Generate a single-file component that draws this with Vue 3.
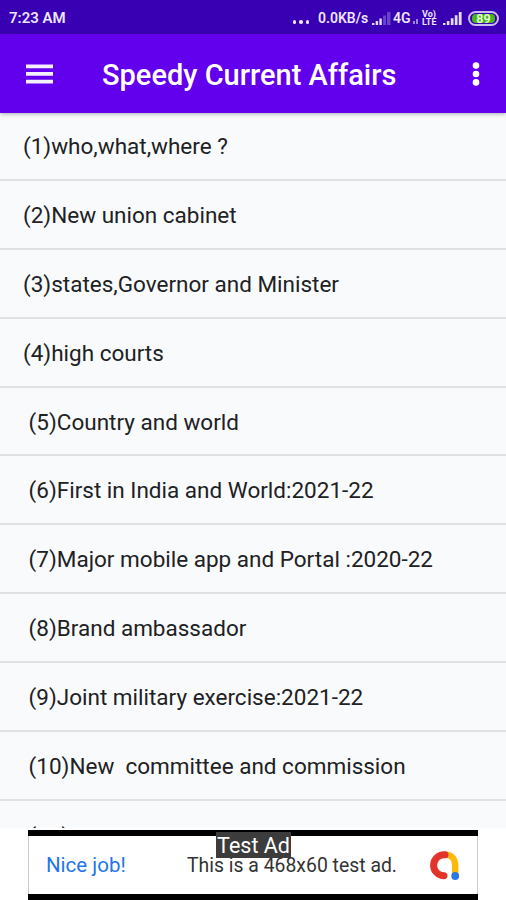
<script setup>
const items = [
  '(1)who,what,where ?',
  '(2)New union cabinet',
  '(3)states,Governor and Minister',
  '(4)high courts',
  ' (5)Country and world',
  ' (6)First in India and World:2021-22',
  ' (7)Major mobile app and Portal :2020-22',
  ' (8)Brand ambassador',
  ' (9)Joint military exercise:2021-22',
  ' (10)New  committee and commission',
  ' (11)Account and Organisation',
]
</script>

<template>
  <div class="screen">
    <header class="status">
      <span class="time">7:23 AM</span>
      <span class="dots"><i></i><i></i><i></i></span>
      <span class="speed">0.0KB/s</span>
      <svg class="sig1" width="19" height="13" viewBox="0 0 19 13">
        <path d="M0 11h2.4v2H0zM3.7 9h2.4v4H3.7zM7.4 6.5h2.4V13H7.4z" fill="#e4dcff" />
        <path d="M11.1 3.5h2.9V13h-2.9zM15 0h3.5v13H15z" fill="#6545c9" />
      </svg>
      <span class="net">4G</span>
      <svg class="mini" width="6" height="5" viewBox="0 0 6 5"><path d="M0 2h2v3H0zM3 0h2v5H3z" fill="#9a86df" /></svg>
      <span class="volte"><b>Vo)</b><b>LTE</b></span>
      <svg class="sig2" width="19" height="13" viewBox="0 0 19 13">
        <path d="M0 11h2.4v2H0zM3.8 9h2.6v4H3.8zM7.8 6.3h2.7V13H7.8zM11.8 3.2h2.7V13h-2.7zM15.8 0h2.8v13h-2.8z" fill="#e4dcff" />
      </svg>
      <span class="battery"><span>89</span></span>
    </header>
    <nav class="bar">
      <svg class="menu" width="27" height="20" viewBox="0 0 27 20">
        <path d="M0 .5h27v3.7H0zM0 8.1h27v3.7H0zM0 15.7h27v3.7H0z" fill="#f5f0ff" />
      </svg>
      <h1>Speedy Current Affairs</h1>
      <svg class="more" width="8" height="24" viewBox="0 0 8 24" fill="#fff">
        <circle cx="4" cy="3.6" r="3.3" /><circle cx="4" cy="12" r="3.3" /><circle cx="4" cy="20.4" r="3.3" />
      </svg>
    </nav>
    <ul class="list">
      <li v-for="item in items" :key="item">{{ item }}</li>
    </ul>
    <footer class="ad-area">
      <div class="ad">
        <span class="label">Test Ad</span>
        <span class="nice">Nice job!</span>
        <span class="msg">This is a 468x60 test ad.</span>
        <svg class="logo" width="31" height="31" viewBox="0 0 31 31" fill="none" stroke-width="7" stroke-linecap="round">
          <path d="M17 4.8C23 4.8 26.2 10 26.2 15.5V24" stroke="#fbb90a" stroke-width="6.4" />
          <path d="M16 4.8H15.2A10.5 10.5 0 0 0 15 25.8" stroke="#e3342b" />
          <circle cx="26.2" cy="26" r="3.9" fill="#2979e8" />
        </svg>
      </div>
    </footer>
  </div>
</template>

<style>
body { margin: 0; background: #fff; }
</style>

<style scoped>
.screen { width: 506px; height: 900px; overflow: hidden; display: flex; flex-direction: column; background: #fff; font-family: Roboto, sans-serif; }
.status { height: 34px; flex: none; box-sizing: border-box; background: #3900b3; color: #ece6ff; display: flex; align-items: center; padding: 2px 7px 0 9px; font-weight: 600; font-size: 15px; }
.time { width: 62px; white-space: nowrap; }
.dots { display: flex; gap: 3px; margin: 8px 9px 0 auto; }
.dots i { width: 3.5px; height: 3.5px; border-radius: 50%; background: #ece6ff; }
.speed { width: 51px; font-size: 14px; white-space: nowrap; }
.sig1 { margin: 0 2px 0 3px; }
.net { width: 18px; font-size: 14px; }
.mini { margin: 6px 3px 0 2px; }
.volte { display: flex; flex-direction: column; width: 16px; font-size: 9px; line-height: 8px; }
.volte b { font-weight: 700; }
.sig2 { margin: 0 6px 0 5px; }
.battery { width: 31px; height: 15px; box-sizing: border-box; border: 2px solid #c9bdf0; border-radius: 8px; padding: 1px 2px; display: flex; }
.battery span { flex: 1; background: #49b51e; border-radius: 4px; color: #e5ffd8; font-size: 12.5px; line-height: 10px; text-align: center; }
.bar { height: 79px; flex: none; box-sizing: border-box; background: #6200ee; display: flex; align-items: center; padding: 0 26px; position: relative; box-shadow: 0 1px 4px rgba(0, 0, 0, .32); z-index: 1; }
.menu { flex: none; }
h1 { margin: 2px auto 0 49px; color: #fff; font-size: 29px; font-weight: 500; line-height: 36px; white-space: nowrap; }
.list { list-style: none; margin: 0; padding: 0; height: 715px; flex: none; overflow: hidden; background: #f9fafc; }
li { height: 68.85px; box-sizing: border-box; border-bottom: 2px solid #e0e1e3; padding: 0 23px; line-height: 68px; font-size: 22.5px; color: #202123; white-space: pre; }
li:first-child { height: 68px; line-height: 66px; }
li:last-child { line-height: 70px; }
.ad-area { flex: 1; padding: 2px 28px 0; }
.ad { position: relative; width: 450px; height: 70px; box-sizing: border-box; border-top: 6px solid #000; border-bottom: 6px solid #000; background: #fff; box-shadow: inset 1px 0 #ccc, inset -1px 0 #ccc; display: flex; align-items: center; padding-left: 18px; }
.label { position: absolute; left: 188px; top: -4px; width: 75px; height: 26px; background: #3c3c3c; color: #fff; font-size: 21.5px; line-height: 27px; text-align: center; white-space: nowrap; }
.nice { width: 141px; color: #2475ea; font-size: 20.5px; }
.msg { width: 242px; color: #333; font-size: 19.4px; white-space: nowrap; }
</style>
